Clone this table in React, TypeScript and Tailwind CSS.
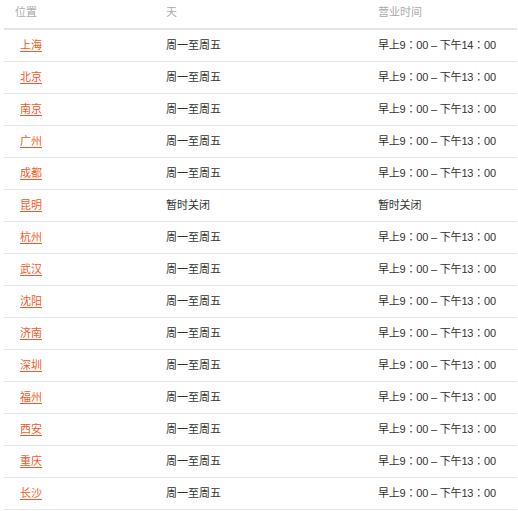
import React from "react";

const cities = [
  { name: "上海", days: "周一至周五", end: "14" },
  { name: "北京", days: "周一至周五", end: "13" },
  { name: "南京", days: "周一至周五", end: "13" },
  { name: "广州", days: "周一至周五", end: "13" },
  { name: "成都", days: "周一至周五", end: "13" },
  { name: "昆明", days: "暂时关闭", end: "" },
  { name: "杭州", days: "周一至周五", end: "13" },
  { name: "武汉", days: "周一至周五", end: "13" },
  { name: "沈阳", days: "周一至周五", end: "13" },
  { name: "济南", days: "周一至周五", end: "13" },
  { name: "深圳", days: "周一至周五", end: "13" },
  { name: "福州", days: "周一至周五", end: "13" },
  { name: "西安", days: "周一至周五", end: "13" },
  { name: "重庆", days: "周一至周五", end: "13" },
  { name: "长沙", days: "周一至周五", end: "13" },
];

function Colon() {
  return (
    <span style={{ fontFamily: '"Noto Sans CJK TC", sans-serif' }}>：</span>
  );
}

export default function App() {
  return (
    <div
      className="bg-white w-[518px] h-[511px] pl-[4px] pr-[1px]"
      style={{ fontFamily: '"Liberation Sans", "Noto Sans CJK SC", sans-serif' }}
    >
      <div className="grid grid-cols-[151px_212px_150px] h-[30px] items-center border-b-2 border-[#e4e4e4] text-[11px] text-[#aaaaaa] pb-[4px]">
        <div className="pl-[11px]">位置</div>
        <div className="pl-[11px]">天</div>
        <div className="pl-[11px]">营业时间</div>
      </div>
      {cities.map((c) => (
        <div
          key={c.name}
          className="grid grid-cols-[151px_212px_150px] h-[32px] items-center border-b border-[#e4e4e4] text-[11px] text-[#333333] pb-[1px]"
        >
          <div className="pl-[16px]">
            <a href="#" className="text-[#f05a28] underline underline-offset-2">
              {c.name}
            </a>
          </div>
          <div className="pl-[11px]">{c.days}</div>
          <div className="pl-[11px] whitespace-nowrap tracking-[-0.2px]">
            {c.end ? (
              <>
                早上9<Colon />00 – 下午{c.end}<Colon />00
              </>
            ) : (
              "暂时关闭"
            )}
          </div>
        </div>
      ))}
    </div>
  );
}
